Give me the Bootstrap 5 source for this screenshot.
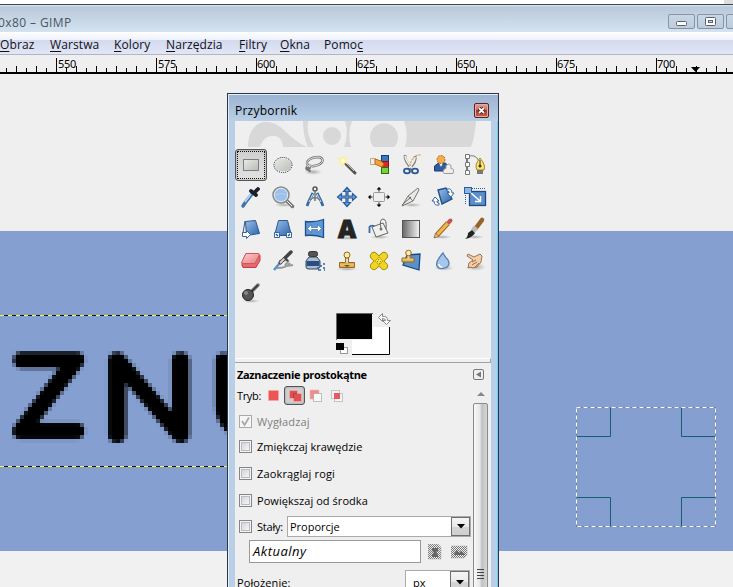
<!DOCTYPE html>
<html lang="pl">
<head>
<meta charset="utf-8">
<meta name="viewport" content="width=device-width, initial-scale=1">
<title>GIMP</title>
<link href="https://cdn.jsdelivr.net/npm/bootstrap@5.3.0/dist/css/bootstrap.min.css" rel="stylesheet">
<style>
body{font-family:"Open Sans","Noto Sans",sans-serif;font-size:11px;line-height:13px;color:#000;background:#efefef;height:587px}
svg{display:block;flex:none}
.top-strip{height:5px;background:linear-gradient(90deg,#fff 724px,#ddd 724px);border-bottom:1px solid #3d4653}
.title-row{height:27px;background:linear-gradient(#dde6ef,#b9c9d9 2px,#d5e3f0);color:#4b5563;font-size:12px;line-height:35px}
.title-row .name{margin-left:-2px;letter-spacing:.4px}
.win-btn{width:27px;height:15px;border:1px solid #8494aa;border-radius:2px;margin-top:9px;background:linear-gradient(#c9d6e4,#bdccdc)}
.menu-row{height:23px;background:linear-gradient(#fff,#eef1fa 8px,#d3daee 8px,#e2e6f6);border-bottom:1px solid #b1b5c6;font-size:12px;line-height:25px}
.menu-row .nav-link{color:#101018;padding:0;white-space:nowrap;line-height:25px;letter-spacing:.1px}
.menu-row u{text-underline-offset:2px}
.ruler{height:19px;background:#efefef}
.work{background:linear-gradient(#efefef 157px,#859fd1 157px,#859fd1 477px,#f1f1f1 477px);min-height:0}
.toolbox{left:227px;top:93px;width:272px;height:500px;border:1px solid #2b3648;background:#b8cfe7;box-shadow:inset 1px 1px #e7f1fa,inset -1px 0 #6bd0f0;padding:1px 6px 0 7px}
.tool-title{height:26px;margin:0 -6px 0 -7px;padding:3px 9px 0 6px;background:linear-gradient(#9bb4d0,#b9cfe7);font-size:12px;line-height:16px;border-left:1px solid #dfeaf5}
.tool-title span{padding-top:5px;letter-spacing:.25px}
.close-btn{width:15px;height:15px;border:1px solid #5d2024;border-radius:2px;background:linear-gradient(#dda99f,#c9685b 48%,#ae3527 50%,#c4644f);box-shadow:inset 0 0 0 1px #e3aaa0;margin-top:5px}
.tool-body{background:#efefef;width:256px}
.tool-cell{width:32px;height:32px;border:1px solid transparent}
.tool-cell svg,.mode svg{overflow:visible}
.tool-cell.on{border:1px solid #555;border-radius:3px;background:linear-gradient(#cfcfcf,#e2e2e2);box-shadow:inset 0 0 2px #888}
.tool-cell.on svg{outline:1px dotted #111;outline-offset:1px}
.swatches{height:49px;padding-left:100px}
.split{height:5px;border-top:1px solid #fff;border-bottom:1px solid #a3a3a3;border-right:1px solid #a3a3a3}
.head-row{height:23px;padding:0 7px 0 2px}
.head-row b{font-size:11px;letter-spacing:-.34px}
.collapse-btn{width:11px;height:11px;border:1px solid #777;border-radius:2px}
.mode{width:21px;height:19px}
.mode.on{border:1px solid #555;border-radius:3px;background:#cfcfcf;box-shadow:inset 0 0 2px #888}
.options{width:238px}
.opt{padding:6px 0 0 4px}
.opt label{margin-left:5px;white-space:nowrap}
.opt .form-check-input{width:13px;height:13px;border:1px solid #858585;border-radius:0;margin:0;background:linear-gradient(135deg,#c8ccd2,#fff);box-shadow:inset 0 0 0 1px #f4f4f4,inset 0 0 0 2px #b9bcc1;flex:none}
.combo{height:21px;border:1px solid #aaa;background:#fff}
.combo .drop{width:19px;border:1px solid #6e6e6e;background:linear-gradient(#f5f5f5,#e9e9e9 50%,#d5d5d5 50%,#cfcfcf)}
.entry{width:172px;height:23px;border:1px solid #999;background:#fff;font-size:13px;line-height:21px;font-style:italic;padding-left:3px;letter-spacing:.5px}
.scroll{width:15px}
.thumb{border:1px solid #8b8b8b;border-radius:2px 2px 0 0;background:linear-gradient(90deg,#f8f8f8,#e7e7e7 45%,#bfc1c3 60%,#d6d6d6)}
.pixel-type{font-family:Lato,"Open Sans",sans-serif;font-weight:100;font-size:102px;stroke:#000;stroke-width:13.5px;stroke-linejoin:round}
</style>
<script src="https://cdn.jsdelivr.net/npm/bootstrap@5.3.0/dist/js/bootstrap.bundle.min.js"></script>
</head>
<body class="d-flex flex-column overflow-hidden position-relative">
<div class="top-strip flex-shrink-0"></div>
<header class="title-row d-flex flex-shrink-0">
  <span class="name me-auto">0x80 – GIMP</span>
  <div class="d-flex" style="gap:2px;margin-right:-20px">
    <div class="win-btn"><svg width="25" height="13"><rect x="7.500" y="6.500" width="10" height="4" rx="1" fill="#fff" stroke="#566173"/></svg></div>
    <div class="win-btn"><svg width="25" height="13"><rect x="7.500" y="2.500" width="10" height="8" rx="1" fill="#fff" stroke="#566173"/><rect x="10.500" y="5.500" width="4" height="2" fill="#ccd7e4" stroke="#566173"/></svg></div>
    <div class="win-btn"></div>
  </div>
</header>
<nav class="menu-row nav flex-nowrap flex-shrink-0">
  <a class="nav-link" style="width:50px"><u>O</u>braz</a><a class="nav-link" style="width:64px"><u>W</u>arstwa</a><a class="nav-link" style="width:52px"><u>K</u>olory</a><a class="nav-link" style="width:73px"><u>N</u>arzędzia</a><a class="nav-link" style="width:41px"><u>F</u>iltry</a><a class="nav-link" style="width:44px"><u>O</u>kna</a><a class="nav-link">Pomo<u>c</u></a>
</nav>
<div class="ruler flex-shrink-0">
<svg width="733" height="19">
  <defs><pattern id="ticks" x="56" y="0" width="100" height="19" patternUnits="userSpaceOnUse"><path d="M.5 3V18M10.500 13v5M20.500 11v7M30.500 13v5M40.500 11v7M50.500 13v5M60.500 11v7M70.500 13v5M80.500 11v7M90.500 13v5" stroke="#000"/></pattern></defs>
  <rect width="733" height="19" fill="url(#ticks)"/><path d="M0 18H733" stroke="#000" stroke-width="2"/>
  <g font-size="11" font-family="Noto Sans" letter-spacing="-.25"><text x="58" y="13">550</text><text x="158" y="13">575</text><text x="257" y="13">600</text><text x="357" y="13">625</text><text x="457" y="13">650</text><text x="557" y="13">675</text><text x="657" y="13">700</text></g>
  <path d="M691 12h9l-4.500 5z"/>
</svg>
</div>
<main class="work flex-grow-1">
<svg width="733" height="513" viewBox="0 74 733 513">
  <defs><filter id="cells" x="-4" y="339" width="240" height="120" filterUnits="userSpaceOnUse" color-interpolation-filters="sRGB">
    <feGaussianBlur in="SourceGraphic" stdDeviation=".9" result="soft"/>
    <feFlood x="-2" y="341" width="1" height="1" flood-color="#000"/>
    <feOffset dx="0" dy="0" x="-4" y="339" width="4" height="4"/>
    <feTile result="grid"/>
    <feComposite in="soft" in2="grid" operator="in" result="p"/>
    <feOffset in="p" dx="1" result="p1"/><feMerge result="q"><feMergeNode in="p"/><feMergeNode in="p1"/></feMerge>
    <feOffset in="q" dx="-2" result="q1"/><feMerge result="r"><feMergeNode in="q"/><feMergeNode in="q1"/></feMerge>
    <feOffset in="r" dy="1" result="r1"/><feMerge result="s"><feMergeNode in="r"/><feMergeNode in="r1"/></feMerge>
    <feOffset in="s" dy="-2" result="s1"/><feMerge><feMergeNode in="s"/><feMergeNode in="s1"/></feMerge>
  </filter></defs>
  <g class="pixel-type" filter="url(#cells)"><text transform="translate(16.500 432) scale(1.080 1)" style="stroke-width:15px">Z</text><text transform="translate(102.500 436) scale(1.230 1.060)">N</text><text transform="translate(211 434) scale(1.150 1.030)">U</text></g>
  <g fill="none"><path d="M0 315.500H228M0 466.500H228" stroke="#111"/><path d="M0 315.500H228" stroke="#f8f840" stroke-dasharray="4 4"/><path d="M0 466.500H228" stroke="#f8f840" stroke-dasharray="4 4"/></g>
  <g fill="none"><path d="M610.500 408V436.500H577M681.500 408V436.500H715M577 497.500H610.500V526M715 497.500H681.500V526" stroke="#155f70"/><rect x="576.500" y="407.500" width="139" height="119" stroke="#77839b"/><rect x="576.500" y="407.500" width="139" height="119" stroke="#fff" stroke-dasharray="4 3"/></g>
</svg>
</main>

<section class="toolbox position-absolute">
  <div class="tool-title d-flex justify-content-between"><span>Przybornik</span><div class="close-btn"><svg width="13" height="13"><path d="M4 4l5 5M9 4L4 9" stroke="#4d1a19" stroke-width="3.500"/><path d="M4 4l5 5M9 4L4 9" stroke="#fff" stroke-width="1.800"/></svg></div></div>
  <div class="tool-body">
    <svg width="256" height="28" viewBox="235 121 256 28"><path d="M248 147C248 128 258 121 268 122C284 124 287 138 307 147H283C283 132 264 132 260 147Z" fill="#d8d8d8"/><path d="M303 121H352Q347 134 351 147H308Q303 136 303 121Z" fill="#d8d8d8"/><path d="M308 121H345Q349 134 344 147H314Q306 134 308 121Z" fill="#efefef"/><circle cx="332" cy="136" r="9" fill="#d8d8d8"/><path d="M374 147a14 14 0 1 1 20 0ZM404 121H476Q475 136 471 147H405Q409 134 404 121Z" fill="#d8d8d8"/></svg>
    <svg width="0" height="0" class="position-absolute"><defs>
      <linearGradient id="blu" x2="1" y2="1"><stop stop-color="#9dbfe5"/><stop offset="1" stop-color="#2763ae"/></linearGradient>
      <linearGradient id="gry"><stop stop-color="#686868"/><stop offset="1" stop-color="#f5f5f5"/></linearGradient>
      <linearGradient id="sil" x2="1" y2="1"><stop stop-color="#e9ece7"/><stop offset="1" stop-color="#b7bcb4"/></linearGradient>
      <linearGradient id="pnk" x2="1" y2="1"><stop stop-color="#fbd0d0"/><stop offset="1" stop-color="#e87d80"/></linearGradient>
      <linearGradient id="gld" y2="1" x2="0"><stop stop-color="#fff0bd"/><stop offset="1" stop-color="#dda845"/></linearGradient>
      <radialGradient id="shade"><stop stop-color="#555" stop-opacity=".45"/><stop offset="1" stop-color="#777" stop-opacity="0"/></radialGradient>
    </defs></svg>
    <div class="d-flex flex-wrap">
      <div class="tool-cell on d-flex align-items-center justify-content-center"><svg width="24" height="24"><rect x="4.500" y="6.500" width="15" height="11" fill="url(#sil)" stroke="#fff"/><rect x="4.500" y="6.500" width="15" height="11" fill="none" stroke="#000" stroke-dasharray="1 1"/></svg></div>
      <div class="tool-cell d-flex align-items-center justify-content-center"><svg width="24" height="24"><ellipse cx="12" cy="12" rx="9" ry="7" fill="url(#sil)" stroke="#fff"/><ellipse cx="12" cy="12" rx="9" ry="7.500" fill="none" stroke="#111" stroke-dasharray="1 1"/></svg></div>
      <div class="tool-cell d-flex align-items-center justify-content-center"><svg width="24" height="24" fill="none"><ellipse cx="10" cy="19" rx="9" ry="3" fill="url(#shade)"/><path d="M7 14C-1 9 8 4 16 4C23 6 19 12 11 13C8 14 6 11 4 14C2 17 6 18 7 14M5 14l2 5" stroke="#777" stroke-width="2.500"/><path d="M7 14C-1 9 8 4 16 4C23 6 19 12 11 13C8 14 6 11 4 14" stroke="#e6e6e6"/></svg></div>
      <div class="tool-cell d-flex align-items-center justify-content-center"><svg width="24" height="24"><path d="M11 11L20 20" stroke="#555" stroke-width="3" stroke-linecap="round"/><path d="M11 10L19 18" stroke="#c1c1bb"/><path d="M7 2L8.500 6L13 4L10.500 8L14 11L9 10L8 15L6.500 10L2 11L5 8L2 4L6 6Z" fill="#fff27d" opacity=".9"/><circle cx="8" cy="8" r="2" fill="#fffde0"/></svg></div>
      <div class="tool-cell d-flex align-items-center justify-content-center"><svg width="24" height="24"><rect x="14.500" y="2.500" width="7" height="6" fill="#3976c3" stroke="#173d70"/><rect x="14.500" y="8.500" width="7" height="6" fill="#df2525" stroke="#8b1111"/><rect x="14.500" y="14.500" width="7" height="6" fill="#74d23a" stroke="#276f12"/><path d="M3.500 5.500h5v6h-5z" fill="#eee" stroke="#c3ab77"/><path d="M8 6l6 2 3 3-2 3-5-2-2-1z" fill="#f6a13b" stroke="#bd6919"/></svg></div>
      <div class="tool-cell d-flex align-items-center justify-content-center"><svg width="24" height="24" fill="none"><g transform="translate(2)"><path d="M4 2Q3 8 12 17M14 3Q16 9 7 17" stroke="#888" stroke-width="2.800"/><path d="M4 3Q5 9 12 16M14 4Q14 9 7 16" stroke="#f4f4ee" stroke-width="1.500"/><ellipse cx="6" cy="18" rx="3" ry="2.300" stroke="#2b5792" stroke-width="1.800"/><ellipse cx="14" cy="18" rx="3" ry="2.300" stroke="#2b5792" stroke-width="1.800"/><path d="M9 13Q11 1 20 2" stroke="#c88632" stroke-dasharray="2 1"/></g></svg></div>
      <div class="tool-cell d-flex align-items-center justify-content-center"><svg width="24" height="24"><path d="M3.500 18v-5l4-3h7l2 3v5z" fill="#315da0" stroke="#173b70"/><path d="M8 10h4l-2 4z" fill="#eee"/><circle cx="10" cy="6.500" r="4" fill="#f3ad4a" stroke="#b8671c" stroke-dasharray="2 1"/><path d="M13 20.500c-2-2 0-5 2-5v-3q3-3 5 0v3q4 0 2 5z" fill="#eee" stroke="#999"/></svg></div>
      <div class="tool-cell d-flex align-items-center justify-content-center"><svg width="24" height="24" fill="none"><path d="M4 20V4Q12 0 16 8" stroke="#777"/><path d="M4 5v14" stroke="#777" stroke-width="2"/><g fill="#fff" stroke="#777"><path d="M2.500 1.500h4v4h-4zM2.500 9.500h4v4h-4zM2.500 17.500h4v4h-4z"/></g><path d="M17 5Q11 12 14 17h7Q23 12 17 5Z" fill="#ffe56f" stroke="#a98219"/><path d="M14 17h6v4h-6z" fill="#777"/><path d="M17 7v5" stroke="#333"/><circle cx="17" cy="13" r="1.500" fill="#333"/></svg></div>

      <div class="tool-cell d-flex align-items-center justify-content-center"><svg width="24" height="24"><path d="M13 9L6 18l-2 3" stroke="#3c73b2" stroke-width="3.500" stroke-linecap="round" fill="none"/><path d="M12 9L6 17" stroke="#b9daf5" stroke-width="1.500"/><path d="M12 6l5 4M15 8l4-4" stroke="#18202b" stroke-width="3.800" stroke-linecap="round"/></svg></div>
      <div class="tool-cell d-flex align-items-center justify-content-center"><svg width="24" height="24"><ellipse cx="13" cy="20" rx="10" ry="2" fill="url(#shade)"/><path d="M16 16l5.500 5.500" stroke="#777" stroke-width="3.500" stroke-linecap="round"/><path d="M16 16l5 5" stroke="#eee"/><circle cx="10" cy="10" r="8" fill="#9dc1e8" stroke="#888" stroke-width="1.500"/><circle cx="10" cy="10" r="6.700" fill="none" stroke="#dcecfa"/><path d="M4 10q6-3 12 0" stroke="#b4d1ee" fill="none"/></svg></div>
      <div class="tool-cell d-flex align-items-center justify-content-center"><svg width="24" height="24" fill="none"><circle cx="12" cy="4" r="2" stroke="#555" stroke-width="1.500"/><path d="M10 8L6 16 4 21M14 8l4 8 2 5" stroke="#3468a6" stroke-width="2.800"/><path d="M10 9L6 17M14 9l4 8" stroke="#d6e8f9"/><path d="M7 15q5-5 10 0M12 6v10" stroke="#777" stroke-width="1.500"/></svg></div>
      <div class="tool-cell d-flex align-items-center justify-content-center"><svg width="24" height="24"><path d="M12 2.500l3.500 4H13V11h4.500V8.500l4 3.500-4 3.500V13H13v4.500h2.500l-3.500 4-3.500-4H11V13H6.500v2.500l-4-3.500 4-3.500V11H11V6.500H8.500z" fill="#6c9fd7" stroke="#2a5c9c" stroke-width="1.200"/></svg></div>
      <div class="tool-cell d-flex align-items-center justify-content-center"><svg width="24" height="24"><rect x="6.500" y="7.500" width="11" height="9" rx="1" fill="#eee" stroke="#999"/><path d="M12 2l2.500 2.500h-2v2h-1v-2h-2zM12 22l2.500-2.500h-2v-2h-1v2h-2zM1 12l2.500-2.500v2h2v1h-2v2zM23 12l-2.500-2.500v2h-2v1h2v2z"/></svg></div>
      <div class="tool-cell d-flex align-items-center justify-content-center"><svg width="24" height="24"><ellipse cx="13" cy="20" rx="10" ry="2" fill="url(#shade)"/><path d="M3 21L9 11l5 5zM9 11L19 3l1 2-6 11z" fill="#e8e8e4" stroke="#777"/><path d="M3 20l9-8" stroke="#666"/></svg></div>
      <div class="tool-cell d-flex align-items-center justify-content-center"><svg width="24" height="24"><path d="M7 5l8-2 6 11-10 5z" fill="url(#blu)" stroke="#204c87" stroke-width="1.300"/><path d="M16 4q5-1 5 4h2l-3 4-4-4h2q1-2-2-2zM8 20q-5 1-5-4H1l3-4 4 4H6q-1 2 2 2z" fill="#fff" stroke="#3866a1"/></svg></div>
      <div class="tool-cell d-flex align-items-center justify-content-center"><svg width="26" height="24"><rect x="7.500" y="6.500" width="16" height="14" fill="#5c8fcb" stroke="#1b4a85" stroke-width="1.300"/><rect x="2.500" y="2.500" width="7" height="6" fill="#8cb5df" stroke="#2d5e9b"/><path d="M10 3.500h13M3.500 10v10" stroke="#2d5e9b" stroke-dasharray="1 1"/><path d="M9 8l9 8M18.500 11v5.500H13" stroke="#fff" fill="none" stroke-width="1.500"/></svg></div>

      <div class="tool-cell d-flex align-items-center justify-content-center"><svg width="24" height="24"><path d="M6.500 4.500l10-1 4 13-13 2z" fill="url(#blu)" stroke="#285996"/><path d="M6 4L4 16" stroke="#285996"/><path d="M3.500 15.500h4v-2l4 4-4 4v-2h-4z" fill="#fff" stroke="#35669c"/></svg></div>
      <div class="tool-cell d-flex align-items-center justify-content-center"><svg width="24" height="24"><path d="M7.500 3.500h9l4 15h-17z" fill="url(#blu)" stroke="#285996"/><path d="M3.500 15.500h5v5h-5zM15.500 15.500h5v5h-5z" fill="#fff" stroke="#35669c"/><path d="M5 17l2 2M19 17l-2 2" stroke="#285996" stroke-width="1.500"/></svg></div>
      <div class="tool-cell d-flex align-items-center justify-content-center"><svg width="24" height="24"><path d="M2.500 4.500q9 1 18-2v18q-9-3-18-2z" fill="#6197d4" stroke="#1f508e" stroke-width="1.300"/><path d="M4.500 11.500l4-4v3h6v-3l4 4-4 4v-3h-6v3z" fill="#fff" stroke="#34659c" stroke-width=".6"/></svg></div>
      <div class="tool-cell d-flex align-items-center justify-content-center"><svg width="24" height="24"><ellipse cx="12" cy="21" rx="11" ry="2" fill="url(#shade)"/><text x="12" y="21" text-anchor="middle" font-family="Open Sans" font-weight="800" font-size="25" fill="#242424" stroke="#242424">A</text></svg></div>
      <div class="tool-cell d-flex align-items-center justify-content-center"><svg width="24" height="24"><ellipse cx="13" cy="20" rx="10" ry="2" fill="url(#shade)"/><path d="M5 10l11-4 5 10-12 4z" fill="#f0f0ee" stroke="#666"/><path d="M2.500 16V10q1-2 5-1" stroke="#346baa" stroke-width="1.800" fill="none"/><path d="M14 12q-2-10 2-10t3 10" stroke="#666" fill="none"/><circle cx="14" cy="12" r="1.500" fill="#777"/></svg></div>
      <div class="tool-cell d-flex align-items-center justify-content-center"><svg width="24" height="24"><rect x="3.500" y="3.500" width="17" height="17" fill="url(#gry)" stroke="#555"/></svg></div>
      <div class="tool-cell d-flex align-items-center justify-content-center"><svg width="24" height="24"><ellipse cx="11" cy="20" rx="10" ry="2" fill="url(#shade)"/><path d="M6 18L17 6" stroke="#97631b" stroke-width="5"/><path d="M6 18L17 6" stroke="#f3b64f" stroke-width="3.300"/><path d="M18 5l1.500-1.500" stroke="#c9534d" stroke-width="4" stroke-linecap="round"/><path d="M4.500 16l3.500 3.500L3 21z" fill="#dfbf87" stroke="#68451d" stroke-width=".6"/></svg></div>
      <div class="tool-cell d-flex align-items-center justify-content-center"><svg width="24" height="24"><ellipse cx="12" cy="20" rx="9" ry="2" fill="url(#shade)"/><path d="M13 11L19 3" stroke="#9a6229" stroke-width="4.500" stroke-linecap="round"/><path d="M10 14l3-4" stroke="#bbb" stroke-width="5"/><path d="M9 13l3 3q-3 5-10 6 3-2 3-6z" fill="#222"/></svg></div>

      <div class="tool-cell d-flex align-items-center justify-content-center"><svg width="24" height="24"><path d="M7 4.500h12l2 2v5l-4 7H4l-1-2v-3z" fill="#e56970" stroke="#c43c48"/><path d="M7 4.500h12q2 0 1 2l-4 8H4q-2 0-1-2z" fill="url(#pnk)" stroke="#d85258"/></svg></div>
      <div class="tool-cell d-flex align-items-center justify-content-center"><svg width="24" height="24"><path d="M8 12q13-2 8 2t6 2M6 19q10 0 13-5" stroke="#999" stroke-width="2" fill="none"/><path d="M9 14L20 3" stroke="#444" stroke-width="3.500" stroke-linecap="round"/><path d="M9 14l5-5" stroke="#d5d5d5" stroke-width="1.800"/><path d="M8 15l-5 6" stroke="#5a91ca" stroke-width="2.500"/><path d="M13 8l4 4" stroke="#444" stroke-width="2"/></svg></div>
      <div class="tool-cell d-flex align-items-center justify-content-center"><svg width="24" height="24"><rect x="5.500" y="2.500" width="9" height="5" rx="2" fill="#555" stroke="#2d3338"/><path d="M6 8h8l3 4v6q-1 2-3 2H6q-3 0-3-2v-6z" fill="#aebdce" stroke="#34465a"/><path d="M3.500 12h13v5h-13z" fill="#294f80"/><path d="M14 19h2m1-2h2m1-2h2m-7 6h3m2-2h2m-1 2h1" stroke="#315d9b" stroke-width="1.600"/></svg></div>
      <div class="tool-cell d-flex align-items-center justify-content-center"><svg width="24" height="24"><ellipse cx="12" cy="20" rx="11" ry="2" fill="url(#shade)"/><path d="M10.500 9h3v4.500h6v5h-15v-5h6z" fill="url(#gld)" stroke="#936b25"/><circle cx="12" cy="6" r="3" fill="#ffe8ae" stroke="#936b25"/><path d="M5 14.500h14" stroke="#d8ad5a"/><path d="M9 16h6l-3 2z" fill="#6d501b"/></svg></div>
      <div class="tool-cell d-flex align-items-center justify-content-center"><svg width="24" height="24"><path d="M7 7l10 10M17 7L7 17" stroke="#a38a09" stroke-width="8" stroke-linecap="round"/><path d="M7 7l10 10M17 7L7 17" stroke="#efd624" stroke-width="6.300" stroke-linecap="round"/><path d="M8 12l4-4 4 4-4 4z" fill="#f7df42" stroke="#c7ab1a"/><path d="M11.500 10v1M13.500 12v1M10.500 12v1M12.500 14v1" stroke="#a38a09"/></svg></div>
      <div class="tool-cell d-flex align-items-center justify-content-center"><svg width="24" height="24"><path d="M8 6l13-1-1 16-16-5z" fill="#5c90ca" stroke="#174a80" stroke-width="1.300"/><path d="M8 6h3v3h4v4H3V9h5z" fill="url(#gld)" stroke="#936b25"/><circle cx="9.500" cy="4" r="2.800" fill="#ffe8ae" stroke="#936b25"/></svg></div>
      <div class="tool-cell d-flex align-items-center justify-content-center"><svg width="24" height="24"><ellipse cx="13" cy="19" rx="10" ry="3" fill="url(#shade)"/><path d="M12 4Q4 13 6 17Q8 21 14 19Q20 17 17 11Q14 8 12 4Z" fill="#a6c7eb" stroke="#527fb1" stroke-width="1.300"/><path d="M8 15q0 3 3 3" stroke="#fff" fill="none" stroke-width="1.500"/></svg></div>
      <div class="tool-cell d-flex align-items-center justify-content-center"><svg width="24" height="24"><ellipse cx="13" cy="18" rx="10" ry="4" fill="url(#shade)"/><path d="M17 5l-6 3-6-3-1 2 6 4-4 3-1 5 3-1 1 1 5-1 4-5 1-6z" fill="#f4cda7" stroke="#9c714d"/><path d="M9 13l4-2M9 16l5-3M12 18l4-4" stroke="#9c714d"/></svg></div>

      <div class="tool-cell d-flex align-items-center justify-content-center"><svg width="24" height="24"><ellipse cx="12" cy="20" rx="9" ry="2" fill="url(#shade)"/><path d="M12 11L19 4" stroke="#777" stroke-width="3.500" stroke-linecap="round"/><path d="M12 11L19 4" stroke="#333" stroke-width="1.500"/><circle cx="9" cy="14" r="5.500" fill="#555" stroke="#222"/><circle cx="7" cy="12" r="2" fill="#888"/></svg></div>
    </div>
    <div class="swatches"><svg width="60" height="49" viewBox="335 309 60 49"><rect x="352.500" y="327.500" width="37" height="27" fill="#fff" stroke="#fff"/><path d="M352 354.500h37.500V327" fill="none" stroke="#000"/><path d="M335 312h38v28h-38z" fill="#efefef"/><path d="M336 314h36v25h-36z"/><path d="M336.500 340v-26.500H373" fill="none" stroke="#666"/><rect x="340.500" y="347.500" width="7" height="6" fill="#fff" stroke="#999"/><rect x="336" y="343" width="8" height="7"/><path d="M378.500 317.500l4-4v3q5-1 5 4h3l-4 4-4-4h3q0-2-3-2v3z" fill="#fff" stroke="#888"/></svg></div>
    <div class="split"></div>
    <div class="head-row d-flex align-items-center justify-content-between"><b>Zaznaczenie prostokątne</b><div class="collapse-btn"><svg width="9" height="9"><path d="M7 1.500v6L2 4.500z" fill="#777"/></svg></div></div>
    <div class="d-flex">
      <div class="options d-flex flex-column">
        <div class="d-flex align-items-center" style="height:19px;padding-left:2px;margin-bottom:4px"><span style="width:26px;letter-spacing:-.35px">Tryb:</span>
          <div class="mode d-flex align-items-center justify-content-center"><svg width="14" height="14"><rect x="1.500" y="1.500" width="10" height="10" fill="#ee5555" stroke="#f3aaa8" stroke-dasharray="1 1"/></svg></div>
          <div class="mode on d-flex align-items-center justify-content-center"><svg width="14" height="14"><path d="M1.500 1.500h8v3h4v8h-8v-3h-4z" fill="#df5053" stroke="#ffb5b5" stroke-dasharray="1 1"/><path d="M5.500 9V4.500H9" fill="none" stroke="#b83e43"/></svg></div>
          <div class="mode d-flex align-items-center justify-content-center"><svg width="14" height="14"><path d="M1 1h9v4h-5v5h-4z" fill="#ef8f8c" stroke="#f3b5b3" stroke-dasharray="1 1"/><path d="M4.500 4.500h8v8h-8z" fill="#f8f8f8" stroke="#888" stroke-dasharray="1 1"/></svg></div>
          <div class="mode d-flex align-items-center justify-content-center"><svg width="14" height="14"><path d="M1.500 1.500h8v8h-8zM4.500 4.500h8v8h-8z" fill="#f5f5f5" stroke="#999" stroke-dasharray="1 1"/><path d="M4 4h6v6H4z" fill="#e85c60"/></svg></div>
        </div>
        <div class="opt d-flex align-items-start" style="height:25px"><svg width="13" height="13"><rect x=".5" y=".5" width="12" height="12" fill="#f6f6f6" stroke="#aaa"/><path d="M3 6l2.500 4L10 2.500" fill="none" stroke="#aaa" stroke-width="1.800"/></svg><label style="color:#808080;letter-spacing:.15px">Wygładzaj</label></div>
        <div class="opt d-flex align-items-start" style="height:27px"><input id="o1" class="form-check-input" type="checkbox"><label for="o1">Zmiękczaj krawędzie</label></div>
        <div class="opt d-flex align-items-start" style="height:27px"><input id="o2" class="form-check-input" type="checkbox"><label for="o2" style="letter-spacing:.15px">Zaokrąglaj rogi</label></div>
        <div class="opt d-flex align-items-start" style="height:28px"><input id="o3" class="form-check-input" type="checkbox"><label for="o3" style="letter-spacing:.05px">Powiększaj od środka</label></div>
        <div class="opt d-flex align-items-start pt-0" style="height:24px"><input id="o4" class="form-check-input" type="checkbox" style="margin-top:4px"><label for="o4" style="margin-top:4px;width:30px;letter-spacing:-.2px">Stały:</label>
          <div class="combo d-flex flex-grow-1" style="margin-right:2px"><span class="flex-grow-1" style="padding:3px 0 0 2px">Proporcje</span><div class="drop d-flex align-items-center justify-content-center"><svg width="8" height="5"><path d="M0 0h8L4 4.500z"/></svg></div></div>
        </div>
        <div class="d-flex align-items-center" style="padding-left:14px;height:23px">
          <div class="entry">Aktualny</div>
          <svg width="14" height="16" style="margin-left:7px"><defs><pattern id="dots" width="2" height="2" patternUnits="userSpaceOnUse"><path d="M0 0h1v1H0zM1 1h1v1H1z" fill="#777"/></pattern></defs><path d="M0 0h10l3 3v12H0z" fill="url(#dots)" stroke="#aaa" stroke-width=".5"/><path d="M4 4h6v3L8 8l2 3v2H4v-2l2-3-2-1z" fill="#666"/></svg>
          <svg width="17" height="14" style="margin-left:9px"><path d="M0 1h16v9l-3 3H0z" fill="url(#dots)" stroke="#aaa" stroke-width=".5"/><path d="M3 9l3-4 2 3 2-2 4 3v1H3z" fill="#666"/></svg>
        </div>
        <div class="d-flex align-items-start justify-content-between" style="padding:7px 3px 0 2px;height:27px"><span style="padding-top:6px;letter-spacing:.1px">Położenie:</span><div class="combo d-flex" style="width:65px;height:24px"><span class="flex-grow-1" style="padding:5px 0 0 7px">px</span><div class="drop d-flex align-items-center justify-content-center"><svg width="8" height="5"><path d="M0 0h8L4 4.500z"/></svg></div></div></div>
      </div>
      <div class="scroll d-flex flex-column">
        <svg width="15" height="17"><path d="M4 10h8L8 6z" fill="#888"/></svg>
        <div class="thumb flex-grow-1"><svg width="13" height="180"><path d="M3 165.500h7M3 168.500h7M3 171.500h7M3 174.500h7" stroke="#444"/></svg></div>
      </div>
    </div>
  </div>
</section>
</body>
</html>
